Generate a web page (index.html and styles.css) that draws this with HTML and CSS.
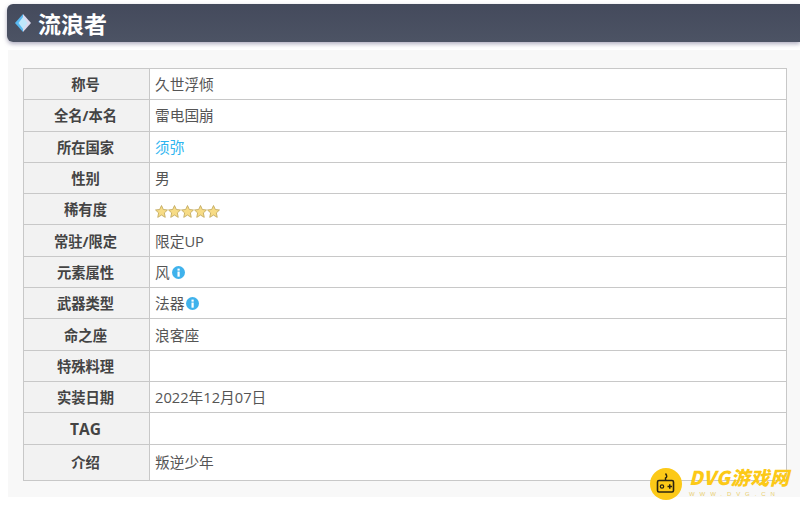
FILE: index.html
```html
<!DOCTYPE html>
<html lang="zh-CN">
<head>
<meta charset="utf-8">
<title>流浪者</title>
<link rel="stylesheet" href="styles.css">
</head>
<body>
<div class="page">
  <header class="title-bar">
    <svg class="gem" viewBox="0 0 16 18" width="16" height="18" aria-hidden="true">
      <polygon points="8,0 16,9 8,18" fill="#dcd9ee"/>
      <polygon points="8,0 0,9 8,18" fill="#58b8f0"/>
      <polygon points="8,3 12.500,9 8,15 3.500,9" fill="#bfe6fb"/>
    </svg>
    <h1 class="title">流浪者</h1>
  </header>
  <main class="panel">
    <table class="info">
      <tbody>
        <tr><th>称号</th><td>久世浮倾</td></tr>
        <tr><th>全名/本名</th><td>雷电国崩</td></tr>
        <tr><th>所在国家</th><td><a class="link" href="#">须弥</a></td></tr>
        <tr><th>性别</th><td>男</td></tr>
        <tr><th>稀有度</th><td>
          <span class="stars">
            <svg class="star" viewBox="0 0 24 24"><polygon points="12,1 15.4,8.3 23,9.2 17.3,14.6 18.9,22.8 12,18.6 5.1,22.8 6.7,14.6 1,9.2 8.6,8.3"/></svg>
            <svg class="star" viewBox="0 0 24 24"><polygon points="12,1 15.4,8.3 23,9.2 17.3,14.6 18.9,22.8 12,18.6 5.1,22.8 6.7,14.6 1,9.2 8.6,8.3"/></svg>
            <svg class="star" viewBox="0 0 24 24"><polygon points="12,1 15.4,8.3 23,9.2 17.3,14.6 18.9,22.8 12,18.6 5.1,22.8 6.7,14.6 1,9.2 8.6,8.3"/></svg>
            <svg class="star" viewBox="0 0 24 24"><polygon points="12,1 15.4,8.3 23,9.2 17.3,14.6 18.9,22.8 12,18.6 5.1,22.8 6.7,14.6 1,9.2 8.6,8.3"/></svg>
            <svg class="star" viewBox="0 0 24 24"><polygon points="12,1 15.4,8.3 23,9.2 17.3,14.6 18.9,22.8 12,18.6 5.1,22.8 6.7,14.6 1,9.2 8.6,8.3"/></svg>
          </span>
        </td></tr>
        <tr><th>常驻/限定</th><td>限定UP</td></tr>
        <tr><th>元素属性</th><td class="with-icon">风<svg class="info-icon" viewBox="0 0 14 14"><circle cx="7" cy="7" r="7" fill="#3fb2ec"/><rect x="5.900" y="6" width="2.400" height="5.500" fill="#fff"/><rect x="5.900" y="2.800" width="2.400" height="2.200" fill="#fff"/></svg></td></tr>
        <tr><th>武器类型</th><td class="with-icon">法器<svg class="info-icon" viewBox="0 0 14 14"><circle cx="7" cy="7" r="7" fill="#3fb2ec"/><rect x="5.900" y="6" width="2.400" height="5.500" fill="#fff"/><rect x="5.900" y="2.800" width="2.400" height="2.200" fill="#fff"/></svg></td></tr>
        <tr><th>命之座</th><td>浪客座</td></tr>
        <tr><th>特殊料理</th><td></td></tr>
        <tr><th>实装日期</th><td>2022年12月07日</td></tr>
        <tr><th class="tag">TAG</th><td></td></tr>
        <tr class="tall"><th>介绍</th><td>叛逆少年</td></tr>
      </tbody>
    </table>
  </main>
  <aside class="watermark">
    <svg class="wm-logo" viewBox="0 0 32 32" width="32" height="32" aria-hidden="true">
      <circle cx="16" cy="16" r="16" fill="#fcc917"/>
      <rect x="7.500" y="12.500" width="16" height="11.500" rx="1.500" fill="none" stroke="#2b2410" stroke-width="1.600"/>
      <path d="M15.500 12.500 V10 Q18 9 15.500 5.500" fill="none" stroke="#2b2410" stroke-width="1.400"/>
      <circle cx="12" cy="18.500" r="1.700" fill="none" stroke="#2b2410" stroke-width="1.200"/>
      <path d="M17.500 18.500 H22 M19.750 16.200 V20.800" stroke="#2b2410" stroke-width="1.500"/>
    </svg>
    <div class="wm-text">
      <span class="wm-name">DVG游戏网</span>
      <span class="wm-url">WWW.DVG.CN</span>
    </div>
  </aside>
</div>
</body>
</html>
```
FILE: styles.css
```css
* { box-sizing: border-box; }
html, body { margin: 0; padding: 0; background: #fff; }
body {
  font-family: "Open Sans", "Noto Sans CJK SC", sans-serif;
  color: #555;
  overflow: hidden;
}
.page {
  position: relative;
  width: 800px;
  height: 509px;
  padding-top: 4px;
}
.title-bar {
  display: flex;
  align-items: center;
  gap: 7px;
  height: 38px;
  margin-left: 7px;
  padding-left: 8px;
  background: linear-gradient(#444a5c, #4c5364);
  border-radius: 6px 0 0 6px;
  box-shadow: 0 2px 4px rgba(110, 105, 140, .55);
}
.title {
  margin: 0;
  font-family: "Noto Sans CJK SC", sans-serif;
  font-size: 23px;
  font-weight: 700;
  line-height: 38px;
  color: #fff;
}
.panel {
  margin: 8px 0 0 8px;
  padding: 18px 13px 16px 15px;
  height: 447px;
  background: #f8f8f8;
}
.info {
  width: 764px;
  table-layout: fixed;
  border-collapse: collapse;
  background: #fff;
  font-size: 14.7px;
}
.info tr { height: 31.3px; }
.info tr.tall { height: 36px; }
.info th, .info td {
  border: 1px solid #c8c8c8;
  padding: 0 5px;
  font-family: "Open Sans", "Noto Sans CJK SC", sans-serif;
  line-height: 20px;
}
.info th {
  width: 126px;
  padding: 2px 7px 0 5px;
  background: #f2f2f2;
  font-size: 14.3px;
  font-weight: 700;
  color: #444;
  text-align: center;
}
.info th.tag { font-size: 15.500px; }
.info td { font-weight: 400; color: #555; }
.link { color: #2eb4ef; text-decoration: none; }
.stars { display: inline-flex; vertical-align: middle; }
.star {
  width: 13px;
  height: 13px;
  fill: #f7dc86;
  stroke: #c2a95e;
  stroke-width: 1.6;
}
.info-icon {
  width: 13px;
  height: 13px;
  margin-left: 2px;
  vertical-align: -1px;
}
.watermark {
  position: absolute;
  left: 650px;
  top: 468px;
  display: flex;
  align-items: flex-start;
  gap: 7px;
}
.wm-text { display: flex; flex-direction: column; gap: 4px; }
.wm-name {
  font-family: "Noto Sans CJK SC", sans-serif;
  font-size: 19px;
  font-weight: 900;
  font-style: italic;
  line-height: 18px;
  letter-spacing: .7px;
  color: #fcc917;
}
.wm-url {
  font-family: "Liberation Sans", sans-serif;
  font-size: 6px;
  line-height: 8px;
  letter-spacing: 4.9px;
  color: #e8cf70;
}
```
